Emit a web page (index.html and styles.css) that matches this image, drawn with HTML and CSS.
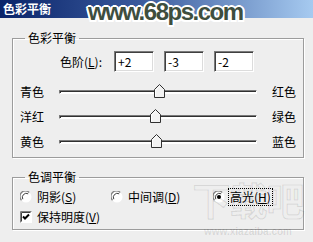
FILE: index.html
```html
<!DOCTYPE html>
<html lang="zh-CN">
<head>
<meta charset="utf-8">
<title>色彩平衡</title>
<link rel="stylesheet" href="styles.css">
</head>
<body>
<div class="titlebar">色彩平衡</div>
<div class="wm68">www.68ps.com</div>
<div class="wmxz"><span class="wmxz-big">下载吧</span><span class="wmxz-url">www.xiazaiba.com</span></div>

<fieldset class="group group-color">
  <legend>色彩平衡</legend>
  <div class="levels">
    <span class="levels-label">色阶(<u>L</u>):</span>
    <span class="field">+2</span>
    <span class="field">-3</span>
    <span class="field">-2</span>
  </div>
  <div class="sliders">
    <div class="srow">
      <span class="lab">青色</span>
      <div class="track"><span class="thumb" style="left:51%"><svg width="11" height="14" viewBox="0 0 11 14"><polygon points="0.5,5.5 5.5,0.5 10.5,5.5 10.5,13.5 0.5,13.5" fill="#f2f2f2" stroke="#303030"/><polyline points="1.5,12.5 1.5,6 5.5,2" fill="none" stroke="#fff"/></svg></span></div>
      <span class="lab lab-r">红色</span>
    </div>
    <div class="srow">
      <span class="lab">洋红</span>
      <div class="track"><span class="thumb" style="left:48.5%"><svg width="11" height="14" viewBox="0 0 11 14"><polygon points="0.5,5.5 5.5,0.5 10.5,5.5 10.5,13.5 0.5,13.5" fill="#f2f2f2" stroke="#303030"/><polyline points="1.5,12.5 1.5,6 5.5,2" fill="none" stroke="#fff"/></svg></span></div>
      <span class="lab lab-r">绿色</span>
    </div>
    <div class="srow">
      <span class="lab">黄色</span>
      <div class="track"><span class="thumb" style="left:49%"><svg width="11" height="14" viewBox="0 0 11 14"><polygon points="0.5,5.5 5.5,0.5 10.5,5.5 10.5,13.5 0.5,13.5" fill="#f2f2f2" stroke="#303030"/><polyline points="1.5,12.5 1.5,6 5.5,2" fill="none" stroke="#fff"/></svg></span></div>
      <span class="lab lab-r">蓝色</span>
    </div>
  </div>
</fieldset>

<fieldset class="group group-tone">
  <legend>色调平衡</legend>
  <div class="radios">
    <label class="opt opt-1"><svg class="radio" width="12" height="12" viewBox="0 0 12 12"><circle cx="6" cy="6" r="5.5" fill="#fff"/><path d="M1.5 9.2 A5.3 5.3 0 0 1 9.2 1.5" fill="none" stroke="#808080" stroke-width="1.3"/><path d="M2.8 8.2 A4 4 0 0 1 8.2 2.8" fill="none" stroke="#404040" stroke-width="1"/></svg><span>阴影(<u>S</u>)</span></label>
    <label class="opt opt-2"><svg class="radio" width="12" height="12" viewBox="0 0 12 12"><circle cx="6" cy="6" r="5.5" fill="#fff"/><path d="M1.5 9.2 A5.3 5.3 0 0 1 9.2 1.5" fill="none" stroke="#808080" stroke-width="1.3"/><path d="M2.8 8.2 A4 4 0 0 1 8.2 2.8" fill="none" stroke="#404040" stroke-width="1"/></svg><span>中间调(<u>D</u>)</span></label>
    <label class="opt opt-3"><svg class="radio" width="12" height="12" viewBox="0 0 12 12"><circle cx="6" cy="6" r="5.5" fill="#fff"/><path d="M1.5 9.2 A5.3 5.3 0 0 1 9.2 1.5" fill="none" stroke="#808080" stroke-width="1.3"/><path d="M2.8 8.2 A4 4 0 0 1 8.2 2.8" fill="none" stroke="#404040" stroke-width="1"/><circle cx="6" cy="6" r="2" fill="#000"/></svg><span class="focus">高光(<u>H</u>)</span></label>
  </div>
  <label class="check"><svg class="cbox" width="12" height="12" viewBox="0 0 12 12"><rect x="0.5" y="0.5" width="11" height="11" fill="#fff" stroke="#fff"/><path d="M0.5 11.5 V0.5 H11.5" fill="none" stroke="#808080"/><path d="M1.5 10.5 V1.5 H10.5" fill="none" stroke="#404040"/><polyline points="3,5.5 5,7.5 9,3.5" fill="none" stroke="#000" stroke-width="2"/></svg><span>保持明度(<u>V</u>)</span></label>
</fieldset>
</body>
</html>
```
FILE: styles.css
```css
* { box-sizing: border-box; }

body {
  margin: 0;
  width: 313px;
  height: 242px;
  overflow: hidden;
  position: relative;
  background: #eeeeee;
  color: #000;
  font-family: "Noto Sans CJK SC", "Liberation Sans", sans-serif;
  font-size: 12px;
  line-height: 14px;
}

.titlebar {
  height: 18px;
  padding-left: 3px;
  background: linear-gradient(90deg, #0a246a 0%, #3a5a9c 45%, #a6caf0 100%);
  color: #fff;
  font-weight: bold;
  font-size: 12px;
  line-height: 18px;
}

.wm68 {
  position: absolute;
  left: 88px;
  top: 0;
  font-family: "Liberation Sans", sans-serif;
  font-weight: bold;
  font-size: 24px;
  line-height: 24px;
  letter-spacing: -1.5px;
  color: #3e4e3e;
  text-shadow:
    2px 0 0 #fff, -2px 0 0 #fff, 0 2px 0 #fff, 0 -2px 0 #fff,
    1.5px 1.5px 0 #fff, -1.5px 1.5px 0 #fff, 1.5px -1.5px 0 #fff, -1.5px -1.5px 0 #fff;
}

.wmxz {
  position: absolute;
  left: 192px;
  top: 171px;
  width: 112px;
  height: 68px;
  display: flex;
  flex-direction: column;
  align-items: center;
  pointer-events: none;
}

.wmxz-big {
  font-size: 38px;
  line-height: 56px;
  font-weight: bold;
  color: transparent;
  -webkit-text-stroke: 1.2px rgba(0, 0, 0, 0.1);
  letter-spacing: -1px;
}

.wmxz-url {
  font-family: "Liberation Sans", sans-serif;
  font-weight: bold;
  font-size: 10px;
  line-height: 10px;
  color: rgba(0, 0, 0, 0.1);
}

.group {
  margin: 0 0 0 12px;
  padding: 0;
  width: 292px;
  border: 1px solid #9c9c9c;
  box-shadow: 1px 1px 0 #fff, inset 1px 1px 0 #fff;
  min-width: 0;
}

.group legend {
  margin-left: 12px;
  padding: 0 3px;
  font-size: 12px;
  line-height: 14px;
}

.group-color {
  margin-top: 13px;
  height: 127px;
}

.group-tone {
  margin-top: 12px;
  height: 60px;
}

.levels {
  display: flex;
  align-items: center;
  margin-top: 6px;
  padding-left: 47px;
  height: 21px;
  gap: 10px;
}

.levels-label {
  width: 44px;
}

.field {
  width: 40px;
  height: 21px;
  padding-left: 3px;
  background: #fff;
  border: 1px solid;
  border-color: #7a7a7a #fff #fff #7a7a7a;
  box-shadow: inset 1px 1px 0 #404040, inset -1px -1px 0 #dcdcdc;
  line-height: 19px;
}

.sliders {
  margin-top: 7px;
  padding-left: 7px;
}

.srow {
  display: grid;
  grid-template-columns: 39px 198px auto;
  align-items: center;
  height: 25px;
}

.lab-r {
  padding-left: 15px;
}

.track {
  position: relative;
  height: 4px;
  background: #fff;
  border: 1px solid;
  border-color: #7a7a7a #fff #fff #7a7a7a;
  box-shadow: inset 1px 1px 0 #303030;
}

.thumb {
  position: absolute;
  top: -7px;
  margin-left: -5.5px;
  width: 11px;
  height: 14px;
  display: block;
}

.thumb svg {
  display: block;
}

.radios {
  display: flex;
  align-items: center;
  height: 18px;
  margin-top: 4px;
  padding-left: 7px;
}

.opt {
  display: flex;
  align-items: center;
  gap: 5px;
}

.opt-1 { width: 91px; }
.opt-2 { width: 102px; }

.radio, .cbox {
  display: block;
  flex: none;
}

.focus {
  border: 1px dotted #000;
  padding: 1px 1px;
  margin-left: -2px;
}

.check {
  display: flex;
  align-items: center;
  gap: 5px;
  height: 18px;
  margin-top: 2px;
  padding-left: 7px;
}

u {
  text-decoration: underline;
  text-underline-offset: 1px;
}
```
